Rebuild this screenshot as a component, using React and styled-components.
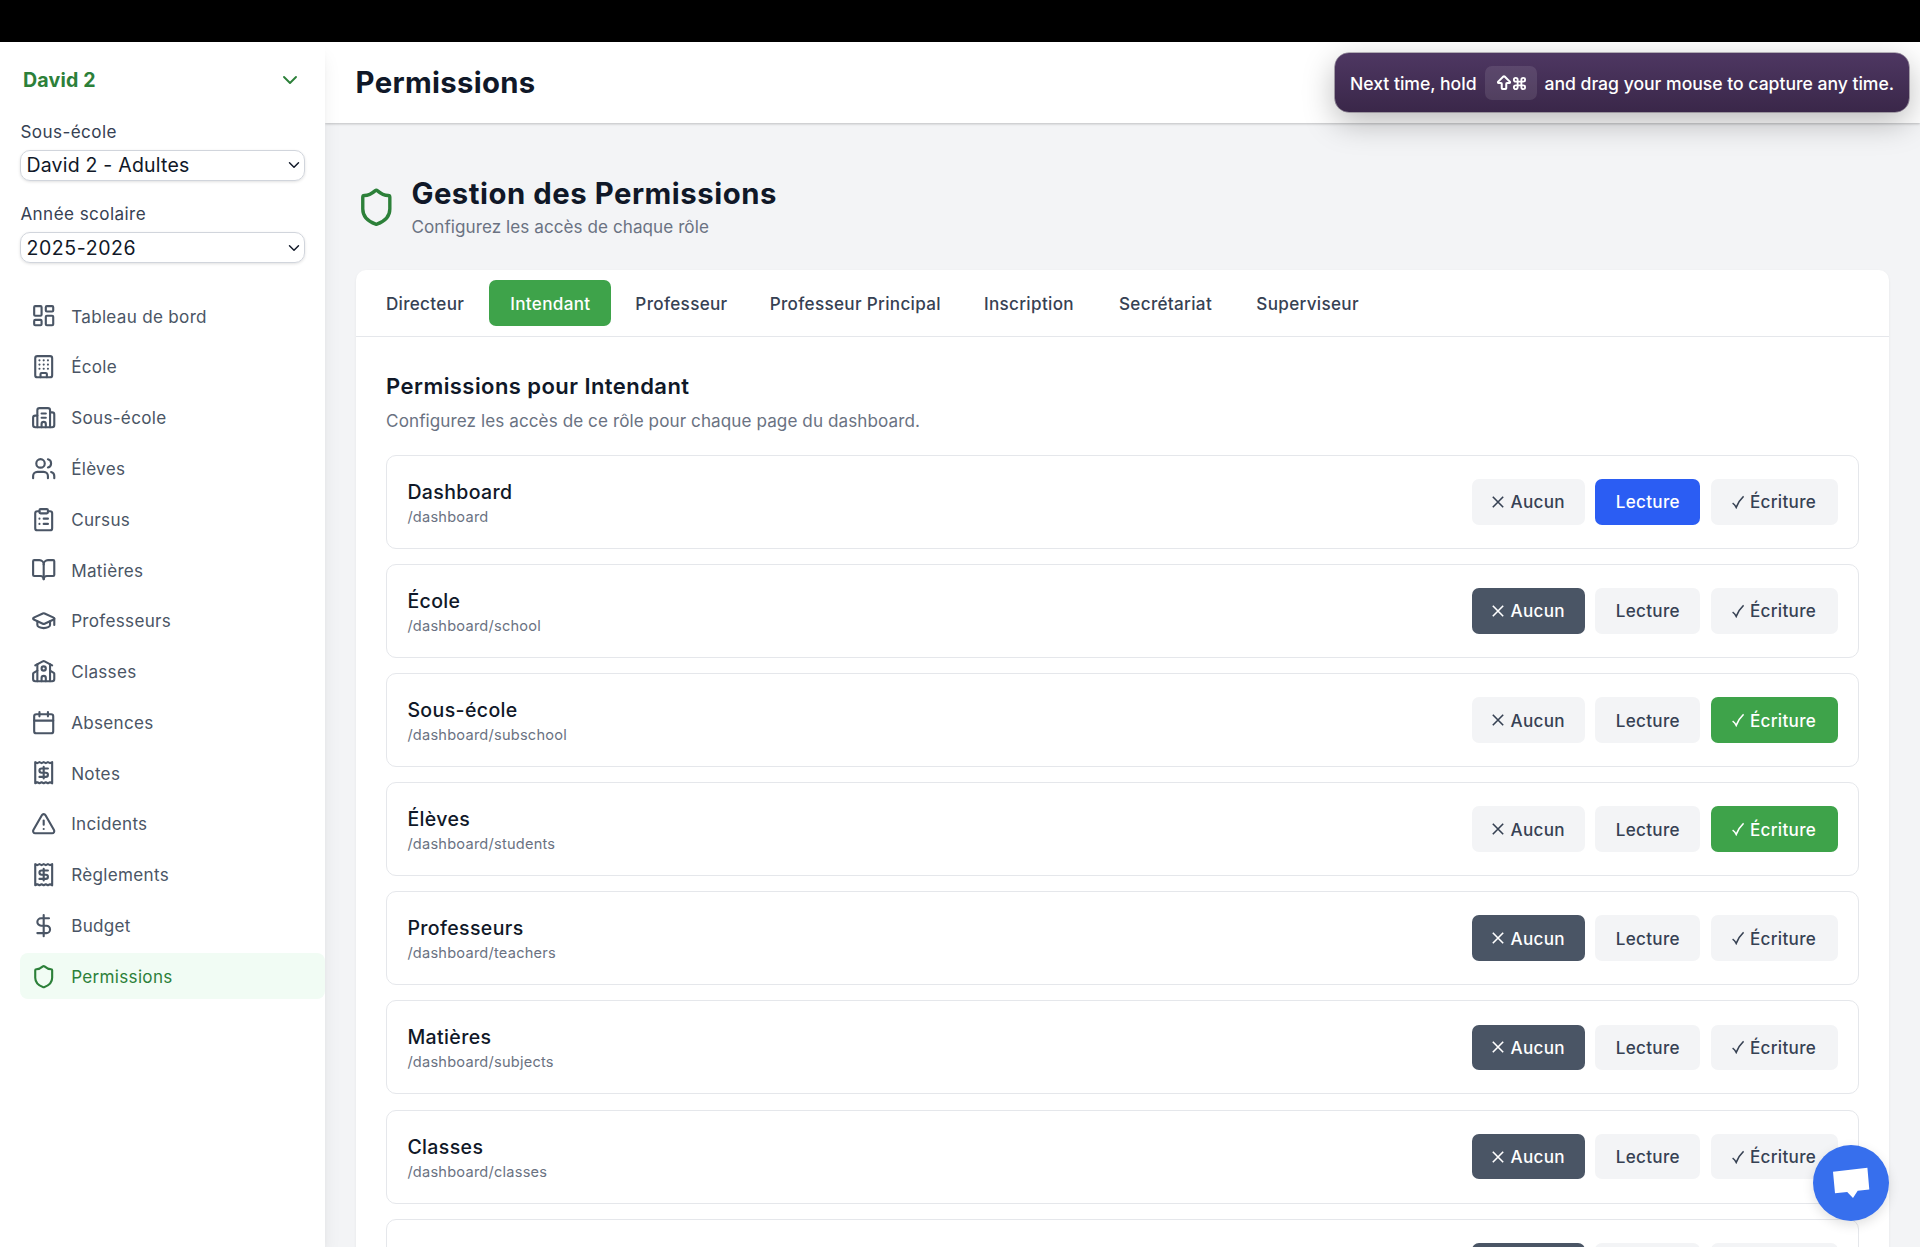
import { useState } from "react";
import styled, { createGlobalStyle } from "styled-components";
import {
  ArrowBigUp,
  BookOpen,
  Building,
  Building2,
  Calendar,
  ChevronDown,
  ClipboardList,
  Command,
  DollarSign,
  GraduationCap,
  LayoutDashboard,
  Receipt,
  School,
  Shield,
  TriangleAlert,
  Users,
} from "lucide-react";

const navItems = [
  { label: "Tableau de bord", icon: LayoutDashboard },
  { label: "École", icon: Building },
  { label: "Sous-école", icon: Building2 },
  { label: "Élèves", icon: Users },
  { label: "Cursus", icon: ClipboardList },
  { label: "Matières", icon: BookOpen },
  { label: "Professeurs", icon: GraduationCap },
  { label: "Classes", icon: School },
  { label: "Absences", icon: Calendar },
  { label: "Notes", icon: Receipt },
  { label: "Incidents", icon: TriangleAlert },
  { label: "Règlements", icon: Receipt },
  { label: "Budget", icon: DollarSign },
  { label: "Permissions", icon: Shield },
];

const roles = [
  { name: "Directeur", width: 118.5 },
  { name: "Intendant", width: 122 },
  { name: "Professeur", width: 130 },
  { name: "Professeur Principal", width: 207.5 },
  { name: "Inscription", width: 129.5 },
  { name: "Secrétariat", width: 133.5 },
  { name: "Superviseur", width: 140.5 },
];

const pages = [
  { name: "Dashboard", path: "/dashboard", access: "read" },
  { name: "École", path: "/dashboard/school", access: "none" },
  { name: "Sous-école", path: "/dashboard/subschool", access: "write" },
  { name: "Élèves", path: "/dashboard/students", access: "write" },
  { name: "Professeurs", path: "/dashboard/teachers", access: "none" },
  { name: "Matières", path: "/dashboard/subjects", access: "none" },
  { name: "Classes", path: "/dashboard/classes", access: "none" },
];

const accessColors = {
  none: "#4a5565",
  read: "#2b5df3",
  write: "#3ea34a",
};

const CrossMark = () => (
  <Mark viewBox="0 0 12 14">
    <path d="M0.8 1.8 11.2 12.2M11.2 1.8 0.8 12.2" />
  </Mark>
);

const CheckMark = () => (
  <Mark viewBox="0 0 12 14">
    <path d="M0.6 8.2Q2.8 9.6 4.2 12.4Q7 5.6 11.6 1.4" />
  </Mark>
);

const Sidebar = () => {
  return (
    <SidebarBox>
      <SchoolSwitch>
        David 2
        <ChevronDown size={24} strokeWidth={1.9} />
      </SchoolSwitch>
      <Field>
        <FieldLabel>Sous-école</FieldLabel>
        <Select>
          David 2 - Adultes
          <ChevronDown size={18} strokeWidth={1.9} />
        </Select>
      </Field>
      <Field>
        <FieldLabel>Année scolaire</FieldLabel>
        <Select $spacing={0.6}>
          2025-2026
          <ChevronDown size={18} strokeWidth={1.9} />
        </Select>
      </Field>
      <Nav>
        {navItems.map(({ label, icon: Icon }) => (
          <NavItem key={label} $active={label === "Permissions"}>
            <Icon size={25.4} strokeWidth={2} />
            {label}
          </NavItem>
        ))}
      </Nav>
    </SidebarBox>
  );
};

const PermissionRow = ({ name, path, initial }) => {
  const [access, setAccess] = useState(initial);

  return (
    <Row>
      <div>
        <RowName>{name}</RowName>
        <RowPath>{path}</RowPath>
      </div>
      <Actions>
        <AccessButton
          $width={113}
          $color={access === "none" && accessColors.none}
          onClick={() => setAccess("none")}
        >
          <CrossMark />
          Aucun
        </AccessButton>
        <AccessButton
          $width={105}
          $color={access === "read" && accessColors.read}
          onClick={() => setAccess("read")}
        >
          Lecture
        </AccessButton>
        <AccessButton
          $width={127}
          $color={access === "write" && accessColors.write}
          onClick={() => setAccess("write")}
        >
          <CheckMark />
          Écriture
        </AccessButton>
      </Actions>
    </Row>
  );
};

const PendingRow = () => (
  <Row>
    <div />
    <Actions>
      <AccessButton $width={113} $color={accessColors.none} />
      <AccessButton $width={105} />
      <AccessButton $width={127} />
    </Actions>
  </Row>
);

const App = () => {
  const [role, setRole] = useState("Intendant");

  return (
    <Page>
      <GlobalStyle />
      <TopBar />
      <Body>
        <Sidebar />
        <Main>
          <Header>Permissions</Header>
          <Content>
            <Intro>
              <Shield size={40.6} strokeWidth={2} />
              <div>
                <IntroTitle>Gestion des Permissions</IntroTitle>
                <IntroText>Configurez les accès de chaque rôle</IntroText>
              </div>
            </Intro>
            <Card>
              <Tabs>
                {roles.map((item) => (
                  <Tab
                    key={item.name}
                    $width={item.width}
                    $active={item.name === role}
                    onClick={() => setRole(item.name)}
                  >
                    {item.name}
                  </Tab>
                ))}
              </Tabs>
              <Panel>
                <PanelTitle>Permissions pour {role}</PanelTitle>
                <PanelText>
                  Configurez les accès de ce rôle pour chaque page du dashboard.
                </PanelText>
                <Rows>
                  {pages.map((page) => (
                    <PermissionRow
                      key={page.path}
                      name={page.name}
                      path={page.path}
                      initial={page.access}
                    />
                  ))}
                  <PendingRow />
                </Rows>
              </Panel>
            </Card>
          </Content>
        </Main>
      </Body>
      <Toast>
        <span>Next time, hold</span>
        <Keys>
          <ArrowBigUp size={18} strokeWidth={2.7} />
          <Command size={15} strokeWidth={3} />
        </Keys>
        <span>and drag your mouse to capture any time.</span>
      </Toast>
      <ChatButton>
        <svg width="38" height="32" viewBox="0 0 38 32" fill="#fff">
          <path d="M1 4.7 35.4 0.8 37.3 22.5 25.7 23.7 21 31 15.2 25 3 26.3Z" />
        </svg>
      </ChatButton>
    </Page>
  );
};

export default App;

const GlobalStyle = createGlobalStyle`
  * {
    box-sizing: border-box;
  }
  body {
    margin: 0;
    font-family: "Inter", "Liberation Sans", sans-serif;
    color: #101828;
    background: #f3f4f6;
    overflow: hidden;
  }
  button {
    font: inherit;
    border: 0;
    padding: 0;
    background: none;
    cursor: pointer;
  }
  h1, h2, p {
    margin: 0;
  }
`;

const Page = styled.div`
  height: 1247px;
  display: flex;
  flex-direction: column;
  overflow: hidden;
`;

const TopBar = styled.div`
  height: 42px;
  flex-shrink: 0;
  background: #000;
`;

const Body = styled.div`
  flex: 1;
  min-height: 0;
  display: flex;
  overflow: hidden;
`;

const SidebarBox = styled.aside`
  position: relative;
  z-index: 1;
  width: 325px;
  flex-shrink: 0;
  padding: 20px 0 0 20.4px;
  background: #fff;
  box-shadow: 0 13px 19px -4px rgba(0, 0, 0, 0.1),
    0 5px 8px -5px rgba(0, 0, 0, 0.1);
`;

const SchoolSwitch = styled.div`
  display: flex;
  align-items: center;
  justify-content: space-between;
  height: 36.5px;
  padding: 0 23px 0 2.5px;
  font-size: 19.6px;
  font-weight: 700;
  letter-spacing: 0.2px;
  color: #2c8039;
`;

const Field = styled.div`
  height: 82.4px;
  padding: 20px 20.4px 0 0;
`;

const FieldLabel = styled.div`
  height: 31px;
  line-height: 25px;
  font-size: 17.1px;
  letter-spacing: 0.42px;
  color: #364153;
`;

const Select = styled.div`
  display: flex;
  align-items: center;
  justify-content: space-between;
  height: 31.5px;
  padding: 0 1px 0 5px;
  border: 1.3px solid #d1d5dc;
  border-radius: 10px;
  font-size: 19.5px;
  letter-spacing: ${({ $spacing }) => $spacing || 0.22}px;
  box-shadow: 0 1px 3px rgba(0, 0, 0, 0.12);
`;

const Nav = styled.nav`
  display: flex;
  flex-direction: column;
  gap: 5.1px;
  margin-top: 30px;
`;

const NavItem = styled.div`
  display: flex;
  align-items: center;
  gap: 15.2px;
  height: 45.7px;
  padding-left: 10.2px;
  border-radius: 8px;
  font-size: 17.1px;
  letter-spacing: 0.3px;
  color: ${({ $active }) => ($active ? "#2c8039" : "#4a5565")};
  background: ${({ $active }) => ($active ? "#f1fcf4" : "transparent")};
`;

const Main = styled.main`
  flex: 1;
  min-width: 0;
`;

const Header = styled.header`
  height: 81px;
  padding: 0 30.6px;
  line-height: 81px;
  font-size: 29.3px;
  font-weight: 700;
  letter-spacing: 0.33px;
  background: #fff;
  box-shadow: 0 1px 3px rgba(0, 0, 0, 0.13), 0 1px 2px rgba(0, 0, 0, 0.1);
`;

const Content = styled.div`
  padding: 50.8px 30.7px 0 30.6px;
`;

const Intro = styled.div`
  display: flex;
  align-items: center;
  gap: 15.2px;
  height: 66px;

  svg {
    color: #2c8039;
  }
`;

const IntroTitle = styled.h1`
  line-height: 40px;
  font-size: 29.3px;
  font-weight: 700;
  letter-spacing: 0.53px;
`;

const IntroText = styled.p`
  line-height: 26px;
  font-size: 17.1px;
  letter-spacing: 0.06px;
  color: #6a7282;
`;

const Card = styled.section`
  margin-top: 30.7px;
  height: 1100px;
  border-radius: 10px;
  background: #fff;
  box-shadow: 0 1px 3px rgba(0, 0, 0, 0.06);
`;

const Tabs = styled.div`
  display: flex;
  gap: 5.1px;
  padding: 9.9px 10.2px;
  height: 67px;
  border-bottom: 1.3px solid #e5e7eb;
`;

const Tab = styled.button`
  width: ${({ $width }) => $width}px;
  height: 45.7px;
  border-radius: 7px;
  font-size: 17.1px;
  font-weight: 450;
  letter-spacing: 0.32px;
  white-space: nowrap;
  color: ${({ $active }) => ($active ? "#fff" : "#364153")};
  background: ${({ $active }) => ($active ? "#3ea34a" : "transparent")};
`;

const Panel = styled.div`
  padding: 30.5px;
`;

const PanelTitle = styled.h2`
  line-height: 36px;
  font-size: 22px;
  font-weight: 600;
  letter-spacing: 0.44px;
`;

const PanelText = styled.p`
  margin-top: 4.3px;
  line-height: 26px;
  font-size: 17.1px;
  letter-spacing: 0.08px;
  color: #6a7282;
`;

const Rows = styled.div`
  display: flex;
  flex-direction: column;
  gap: 15.25px;
  margin-top: 20.5px;
`;

const Row = styled.div`
  display: flex;
  align-items: center;
  justify-content: space-between;
  height: 93.9px;
  flex-shrink: 0;
  padding: 0 20.3px;
  border: 1.3px solid #e5e7eb;
  border-radius: 10px;
`;

const RowName = styled.div`
  line-height: 30px;
  font-size: 19.5px;
  font-weight: 450;
  letter-spacing: 0.38px;
`;

const RowPath = styled.div`
  line-height: 20px;
  font-size: 14.6px;
  letter-spacing: 0.22px;
  color: #6a7282;
`;

const Actions = styled.div`
  display: flex;
  gap: 10.2px;
`;

const AccessButton = styled.button`
  display: flex;
  align-items: center;
  justify-content: center;
  gap: 6px;
  width: ${({ $width }) => $width}px;
  height: 45.7px;
  border-radius: 7px;
  font-size: 17.1px;
  font-weight: 450;
  letter-spacing: 0.3px;
  color: ${({ $color }) => ($color ? "#fff" : "#364153")};
  background: ${({ $color }) => $color || "#f3f4f6"};
`;

const Mark = styled.svg`
  width: 12px;
  height: 14px;
  fill: none;
  stroke: currentColor;
  stroke-width: 1.6;
`;

const Toast = styled.div`
  position: absolute;
  z-index: 2;
  top: 53px;
  left: 1335px;
  width: 574px;
  height: 59px;
  display: flex;
  align-items: center;
  padding: 1px 0 0 15px;
  border-radius: 14px;
  font-size: 17.6px;
  font-weight: 500;
  letter-spacing: -0.02px;
  white-space: nowrap;
  color: #fff;
  background: linear-gradient(#4e3762, #3a2749);
  box-shadow: 0 0 0 0.6px rgba(40, 24, 52, 0.6), 0 10px 32px rgba(0, 0, 0, 0.28);
`;

const Keys = styled.div`
  display: flex;
  align-items: center;
  justify-content: center;
  width: 52px;
  height: 34px;
  margin: 0 8px;
  border-radius: 7px;
  background: rgba(255, 255, 255, 0.1);

  svg:first-child {
    margin-right: -1px;
  }
`;

const ChatButton = styled.button`
  position: absolute;
  z-index: 2;
  left: 1813px;
  top: 1145px;
  width: 76.3px;
  height: 76.3px;
  display: flex;
  align-items: center;
  justify-content: center;
  border-radius: 50%;
  background: #376fed;
  box-shadow: 0 4px 12px rgba(0, 0, 0, 0.12);
`;
